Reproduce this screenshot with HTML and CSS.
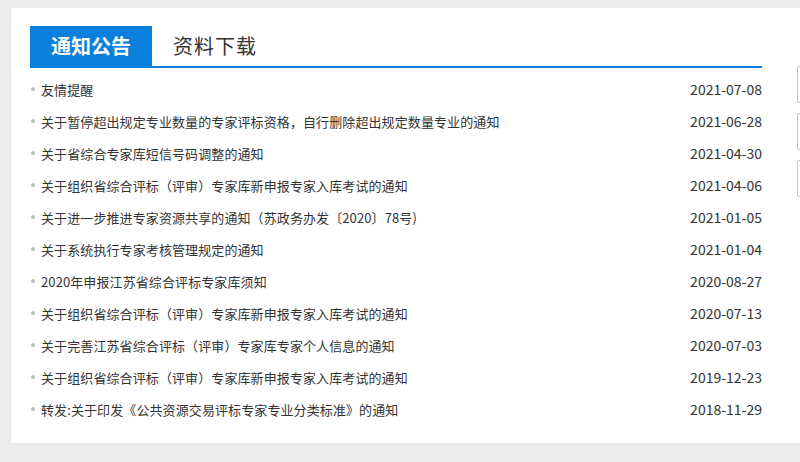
FILE: index.html
```html
<html>
  <head>
    <title>通知公告</title>
    <link rel="stylesheet" href="styles.css">
  </head>
  <body>
    <div class="panel">
      <div class="main">
        <div class="tabs">
          <div class="tab active">通知公告</div>
          <div class="tab">资料下载</div>
        </div>
        <ul class="news">
          <li><span class="title">友情提醒</span><span class="date">2021-07-08</span></li>
          <li><span class="title">关于暂停超出规定专业数量的专家评标资格，自行删除超出规定数量专业的通知</span><span class="date">2021-06-28</span></li>
          <li><span class="title">关于省综合专家库短信号码调整的通知</span><span class="date">2021-04-30</span></li>
          <li><span class="title">关于组织省综合评标（评审）专家库新申报专家入库考试的通知</span><span class="date">2021-04-06</span></li>
          <li><span class="title">关于进一步推进专家资源共享的通知（苏政务办发〔2020〕78号)</span><span class="date">2021-01-05</span></li>
          <li><span class="title">关于系统执行专家考核管理规定的通知</span><span class="date">2021-01-04</span></li>
          <li><span class="title">2020年申报江苏省综合评标专家库须知</span><span class="date">2020-08-27</span></li>
          <li><span class="title">关于组织省综合评标（评审）专家库新申报专家入库考试的通知</span><span class="date">2020-07-13</span></li>
          <li><span class="title">关于完善江苏省综合评标（评审）专家库专家个人信息的通知</span><span class="date">2020-07-03</span></li>
          <li><span class="title">关于组织省综合评标（评审）专家库新申报专家入库考试的通知</span><span class="date">2019-12-23</span></li>
          <li><span class="title">转发:关于印发《公共资源交易评标专家专业分类标准》的通知</span><span class="date">2018-11-29</span></li>
        </ul>
      </div>
      <div class="side">
        <div class="side-box"></div>
        <div class="side-box"></div>
        <div class="side-box"></div>
      </div>
    </div>
  </body>
</html>
```

FILE: styles.css
```css
* {
  box-sizing: border-box;
}
html, body {
  margin: 0;
  height: 100%;
  overflow: hidden;
}
body {
  background-color: #ececec;
  padding: 8px 0 0 11px;
  font-family: "Noto Sans CJK SC", "Microsoft YaHei", sans-serif;
  color: #333;
}
.panel {
  display: flex;
  background-color: #fff;
  width: 820px;
  height: 435px;
  padding: 18px 0 0 19px;
}
.main {
  width: 732px;
}
.tabs {
  display: flex;
  height: 42px;
  border-bottom: 2px solid #0a7fdb;
}
.tab {
  font-size: 20px;
  line-height: 40px;
  color: #333;
  padding: 0 21px;
  letter-spacing: 1px;
}
.tab.active {
  width: 122px;
  padding: 0;
  text-align: center;
  background-color: #0a7fdb;
  color: #fff;
  font-weight: bold;
  letter-spacing: 0;
}
.news {
  list-style: none;
  margin: 0;
  padding: 5px 0 0 0;
}
.news li {
  display: flex;
  justify-content: space-between;
  align-items: center;
  height: 32px;
  font-size: 13px;
  padding-left: 11px;
  position: relative;
}
.news li::before {
  content: "";
  position: absolute;
  left: 1px;
  top: 14px;
  width: 4px;
  height: 4px;
  border-radius: 50%;
  background-color: #bbb;
}
.title {
  letter-spacing: 0.1px;
}
.date {
  font-size: 14px;
  color: #333;
}
.side {
  display: flex;
  flex-direction: column;
  gap: 10px;
  margin-left: 35px;
  padding-top: 40px;
}
.side-box {
  width: 30px;
  height: 37px;
  border: 1px solid #9fd0f7;
  border-radius: 2px;
}
```
